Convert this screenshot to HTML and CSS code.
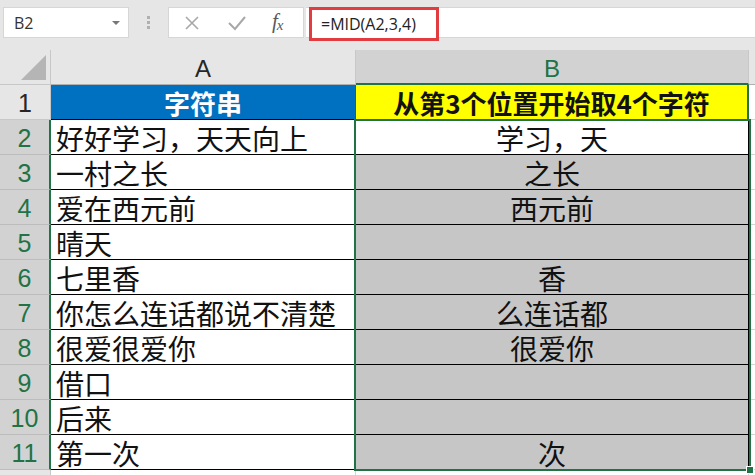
FILE: index.html
```html
<!DOCTYPE html>
<html lang="zh">
<head>
<meta charset="utf-8">
<link rel="stylesheet" href="styles.css">
</head>
<body>
<div class="app">
  <div class="toolbar">
    <div class="namebox">
      <span class="name">B2</span>
      <span class="caret"></span>
    </div>
    <div class="grip"><i></i><i></i><i></i></div>
    <div class="fxbox">
      <svg class="ic" width="18" height="18" viewBox="0 0 18 18"><path d="M3 3 L15 15 M15 3 L3 15" stroke="#a8a8a8" stroke-width="1.6" fill="none"/></svg>
      <svg class="ic" width="20" height="18" viewBox="0 0 20 18"><path d="M2 9 L8 15 L18 3" stroke="#a8a8a8" stroke-width="2" fill="none"/></svg>
      <span class="fx">f<sub>x</sub></span>
    </div>
    <div class="formula">
      <span class="ftext">=MID(A2,3,4)</span>
    </div>
  </div>
  <div class="sheet">
    <div class="corner"><span class="tri"></span></div>
    <div class="colhead">A</div>
    <div class="colhead sel">B</div>
    <div class="colhead rest"></div>

    <div class="rowhead">1</div>
    <div class="cell a head-a">字符串</div>
    <div class="cell b head-b">从第3个位置开始取4个字符</div>
    <div class="cell c"></div>

    <div class="rowhead sel">2</div>
    <div class="cell a">好好学习，天天向上</div>
    <div class="cell b active">学习，天</div>
    <div class="cell c"></div>

    <div class="rowhead sel">3</div>
    <div class="cell a">一村之长</div>
    <div class="cell b">之长</div>
    <div class="cell c"></div>

    <div class="rowhead sel">4</div>
    <div class="cell a">爱在西元前</div>
    <div class="cell b">西元前</div>
    <div class="cell c"></div>

    <div class="rowhead sel">5</div>
    <div class="cell a">晴天</div>
    <div class="cell b"></div>
    <div class="cell c"></div>

    <div class="rowhead sel">6</div>
    <div class="cell a">七里香</div>
    <div class="cell b">香</div>
    <div class="cell c"></div>

    <div class="rowhead sel">7</div>
    <div class="cell a">你怎么连话都说不清楚</div>
    <div class="cell b">么连话都</div>
    <div class="cell c"></div>

    <div class="rowhead sel">8</div>
    <div class="cell a">很爱很爱你</div>
    <div class="cell b">很爱你</div>
    <div class="cell c"></div>

    <div class="rowhead sel">9</div>
    <div class="cell a">借口</div>
    <div class="cell b"></div>
    <div class="cell c"></div>

    <div class="rowhead sel">10</div>
    <div class="cell a">后来</div>
    <div class="cell b"></div>
    <div class="cell c"></div>

    <div class="rowhead sel">11</div>
    <div class="cell a">第一次</div>
    <div class="cell b">次</div>
    <div class="cell c"></div>

    <div class="rowhead"></div>
    <div class="cell a plain"></div>
    <div class="cell b plain"></div>
    <div class="cell c"></div>

    <div class="selection"><span class="handle"></span></div>
  </div>
</div>
</body>
</html>
```

FILE: styles.css
```css
* { box-sizing: border-box; }
html, body { margin: 0; padding: 0; }
body {
  width: 755px;
  height: 475px;
  overflow: hidden;
  background: #e6e6e6;
  font-family: "Noto Sans CJK SC", "Liberation Sans", sans-serif;
}
.app { width: 755px; height: 475px; overflow: hidden; }

.toolbar {
  height: 50px;
  display: flex;
  align-items: flex-start;
  padding-top: 7px;
  background: #e6e6e6;
}
.namebox {
  margin-left: 3px;
  width: 126px;
  height: 31px;
  background: #fff;
  border: 1px solid #d6d6d6;
  display: flex;
  align-items: center;
  justify-content: space-between;
  padding: 0 8px 0 10px;
}
.name {
  font-family: "Open Sans", "Liberation Sans", sans-serif;
  font-size: 16px;
  color: #333;
}
.caret {
  width: 0; height: 0;
  border-left: 4px solid transparent;
  border-right: 4px solid transparent;
  border-top: 4px solid #777;
}
.grip {
  width: 39px;
  height: 31px;
  display: flex;
  flex-direction: column;
  align-items: center;
  justify-content: center;
  gap: 2px;
}
.grip i { display: block; width: 3px; height: 3px; background: #b0b0b0; }
.fxbox {
  width: 136px;
  height: 31px;
  background: #fff;
  border: 1px solid #d6d6d6;
  display: flex;
  align-items: center;
  padding-left: 14px;
}
.fxbox .ic:first-child { margin-right: 26px; }
.fxbox .ic:nth-child(2) { margin-right: 25px; }
.fx {
  font-family: "Liberation Serif", serif;
  font-style: italic;
  font-size: 21px;
  color: #5a5a5a;
  line-height: 1;
  margin-top: -2px;
}
.fx sub { font-size: 15px; vertical-align: -2px; margin-left: -1px; }
.formula {
  margin-left: 2px;
  flex: 1;
  height: 31px;
  background: #fff;
  border-top: 1px solid #d6d6d6;
  border-bottom: 1px solid #d6d6d6;
  padding-left: 3px;
}
.ftext {
  display: inline-flex;
  align-items: center;
  height: 34px;
  width: 130px;
  margin-top: -1px;
  border: 3px solid #e23b40;
  padding-left: 9px;
  font-family: "Open Sans", "Liberation Sans", sans-serif;
  font-size: 16px;
  color: #222;
  background: #fff;
}

.sheet {
  position: relative;
  display: grid;
  grid-template-columns: 51px 305px 393px 6px;
  grid-template-rows: 35px repeat(12, 35px);
  background: #fff;
}
.corner {
  background: #e6e6e6;
  border-right: 1px solid #c8c8c8;
  border-bottom: 1px solid #c8c8c8;
  position: relative;
}
.tri {
  position: absolute;
  right: 4px;
  bottom: 4px;
  width: 0; height: 0;
  border-left: 25px solid transparent;
  border-bottom: 25px solid #b5b5b5;
}
.colhead {
  background: #e6e6e6;
  border-right: 1px solid #c8c8c8;
  border-bottom: 1px solid #b0b0b0;
  display: flex;
  align-items: center;
  justify-content: center;
  font-family: "Liberation Sans", sans-serif;
  font-size: 24px;
  color: #262626;
  padding-top: 4px;
}
.colhead.sel {
  background: #d2d2d2;
  color: #217346;
  border-bottom: 2px solid #217346;
  border-right: 1px solid #c8c8c8;
}
.colhead.rest { border-right: none; }
.rowhead {
  background: #e6e6e6;
  border-bottom: 1px solid #c8c8c8;
  border-right: 1px solid #c8c8c8;
  display: flex;
  align-items: center;
  justify-content: center;
  font-family: "Liberation Sans", sans-serif;
  font-size: 25px;
  color: #262626;
  padding-top: 3px;
}
.rowhead.sel {
  background: #d2d2d2;
  color: #217346;
  border-right: 2px solid #217346;
  border-bottom: 1px solid #bcbcbc;
}
.cell {
  border-bottom: 1px solid #000;
  border-right: 1px solid #000;
  font-size: 28px;
  line-height: 32px;
  color: #111;
  white-space: nowrap;
  display: flex;
  align-items: flex-end;
  padding-bottom: 0;
}
.cell.a { padding-left: 5px; background: #fff; justify-content: flex-start; }
.cell.b { justify-content: center; background: #c6c6c6; }
.cell.b.active { background: #fff; }
.cell.c { background: #fff; border-right: none; border-bottom: 1px solid #d4d4d4; }
.cell.plain { background: #fff; border-bottom: none; border-right: 1px solid #d4d4d4; }
.head-a {
  background: #0070c0 !important;
  color: #fff;
  font-weight: bold;
  font-size: 26px;
  line-height: 31px;
  justify-content: center !important;
  padding-left: 0 !important;
  padding-bottom: 1px;
  border-right: 1px solid #1f6b45;
}
.head-b {
  background: #ffff00 !important;
  color: #111;
  font-weight: bold;
  font-size: 26px;
  line-height: 31px;
  padding-bottom: 1px;
  border-right: 2px solid #217346;
}
.selection {
  position: absolute;
  left: 354px;
  top: 69px;
  width: 397px;
  height: 352px;
  border: 2px solid #217346;
  pointer-events: none;
}
.handle {
  position: absolute;
  right: -5px;
  bottom: -5px;
  width: 8px;
  height: 8px;
  background: #217346;
  border: 1px solid #fff;
}
```
